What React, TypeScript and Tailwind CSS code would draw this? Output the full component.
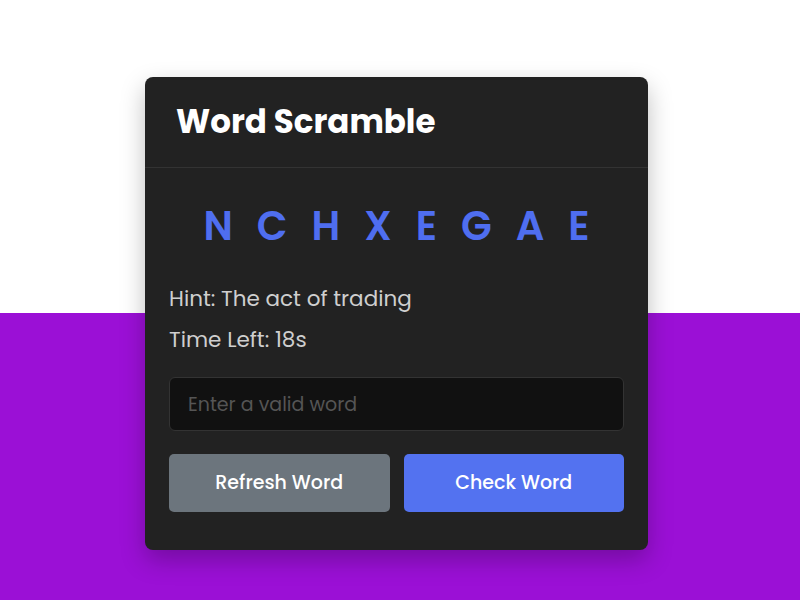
import { useState } from 'react';

const letters = ['N', 'C', 'H', 'X', 'E', 'G', 'A', 'E'];

export default function App() {
  const [guess, setGuess] = useState('');

  return (
    <div
      className="min-h-screen flex items-center justify-center pr-[7px] pt-[27px] bg-[linear-gradient(to_bottom,#ffffff_313px,#9b10d6_313px)]"
      style={{ fontFamily: '"Poppins", "Open Sans", sans-serif' }}
    >
      <div className="w-[503px] rounded-[8px] bg-[#222222] shadow-[0_10px_25px_rgba(0,0,0,0.25)]">
        <div className="h-[91px] px-[31px] flex items-center border-b border-[#333333]">
          <h2 className="text-[32.5px] font-bold text-white">Word Scramble</h2>
        </div>

        <div className="px-[24px] pt-[35px] pb-[38px]">
          <div className="flex justify-center gap-[24px] text-[40px] leading-[46px] font-semibold text-[#4f6ef0] select-none">
            {letters.map((l, i) => (
              <span key={i}>{l}</span>
            ))}
          </div>

          <div className="mt-[36px] text-[#cfcfcf] text-[21.5px] leading-[28px]">
            <p className="mb-[13px]">Hint: The act of trading</p>
            <p>Time Left: 18s</p>
          </div>

          <input
            type="text"
            value={guess}
            onChange={(e) => setGuess(e.target.value)}
            placeholder="Enter a valid word"
            className="mt-[23px] w-full h-[54px] px-[18px] rounded-[6px] bg-[#111111] border border-[#333333] text-[19px] text-white placeholder:text-[#555555] outline-none"
          />

          <div className="mt-[23px] flex gap-[14px]">
            <button className="flex-1 h-[58px] rounded-[5px] bg-[#6c757d] text-white text-[19px] font-medium">
              Refresh Word
            </button>
            <button className="flex-1 h-[58px] rounded-[5px] bg-[#5372f0] text-white text-[19px] font-medium">
              Check Word
            </button>
          </div>
        </div>
      </div>
    </div>
  );
}
